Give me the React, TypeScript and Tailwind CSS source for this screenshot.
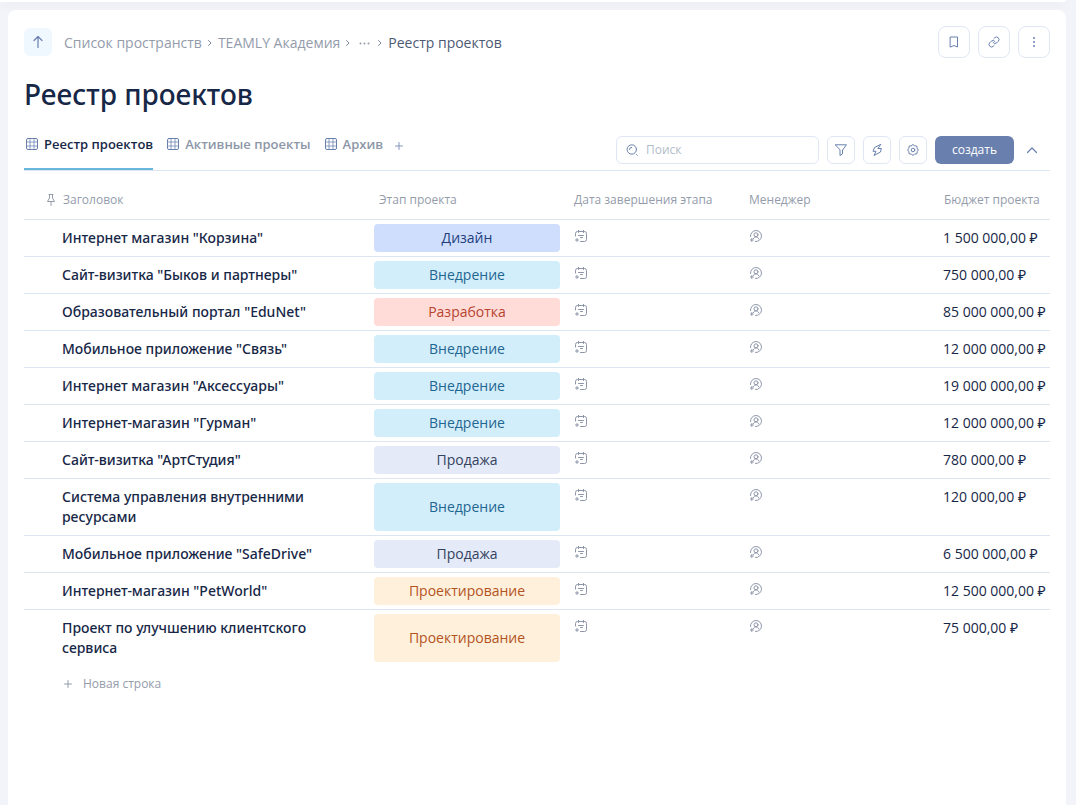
import type { ReactNode } from "react";
import { clsx } from "clsx";

type Stage = "Дизайн" | "Внедрение" | "Разработка" | "Продажа" | "Проектирование";

interface Project {
  title: string;
  stage: Stage;
  budget: string;
}

const stageStyles: Record<Stage, string> = {
  "Дизайн": "bg-[#cfdefd] text-[#1f3f7f]",
  "Внедрение": "bg-[#d3eefb] text-[#1f6690]",
  "Разработка": "bg-[#ffdcd8] text-[#b8432f]",
  "Продажа": "bg-[#e4eaf7] text-[#33425f]",
  "Проектирование": "bg-[#fff0dc] text-[#b3531c]",
};

const projects: Project[] = [
  { title: 'Интернет магазин "Корзина"', stage: "Дизайн", budget: "1 500 000,00 ₽" },
  { title: 'Сайт-визитка "Быков и партнеры"', stage: "Внедрение", budget: "750 000,00 ₽" },
  { title: 'Образовательный портал "EduNet"', stage: "Разработка", budget: "85 000 000,00 ₽" },
  { title: 'Мобильное приложение "Связь"', stage: "Внедрение", budget: "12 000 000,00 ₽" },
  { title: 'Интернет магазин "Аксессуары"', stage: "Внедрение", budget: "19 000 000,00 ₽" },
  { title: 'Интернет-магазин "Гурман"', stage: "Внедрение", budget: "12 000 000,00 ₽" },
  { title: 'Сайт-визитка "АртСтудия"', stage: "Продажа", budget: "780 000,00 ₽" },
  { title: "Система управления внутренними ресурсами", stage: "Внедрение", budget: "120 000,00 ₽" },
  { title: 'Мобильное приложение "SafeDrive"', stage: "Продажа", budget: "6 500 000,00 ₽" },
  { title: 'Интернет-магазин "PetWorld"', stage: "Проектирование", budget: "12 500 000,00 ₽" },
  { title: "Проект по улучшению клиентского сервиса", stage: "Проектирование", budget: "75 000,00 ₽" },
];

const tabs = [
  { label: "Реестр проектов", active: true },
  { label: "Активные проекты", active: false },
  { label: "Архив", active: false },
];

function Icon({ size = 12, box = 12, children }: { size?: number; box?: number; children: ReactNode }) {
  return (
    <svg
      width={size}
      height={size}
      viewBox={`0 0 ${box} ${box}`}
      fill="none"
      stroke="currentColor"
      strokeLinecap="round"
      strokeLinejoin="round"
      className="shrink-0"
      aria-hidden="true"
    >
      {children}
    </svg>
  );
}

function GridIcon() {
  return (
    <Icon>
      <rect x="0.5" y="0.5" width="11" height="11" rx="1.5" />
      <path d="M4 1v10M8 1v10M1 4h10M1 8h10" strokeOpacity="0.75" />
    </Icon>
  );
}

function ChevronSeparator() {
  return (
    <span className="text-[#7d889f]">
      <Icon size={8} box={8}>
        <path d="M2.5 1.5 5 4 2.5 6.500" />
      </Icon>
    </span>
  );
}

function PlusIcon() {
  return (
    <Icon size={8} box={8}>
      <path d="M4 0.5v7M0.5 4h7" />
    </Icon>
  );
}

function CalendarIcon() {
  return (
    <Icon>
      <path d="M0.5 6V3.5a2 2 0 0 1 2-2h7a2 2 0 0 1 2 2v6a2 2 0 0 1-2 2H5.5" />
      <path d="M3.5 0v2.5M8.5 0v2.5M3.5 5.5h5M5.5 7.5h2M2 8.5v3M0.5 10h3" />
    </Icon>
  );
}

function PersonIcon() {
  return (
    <Icon>
      <path d="M0.5 6.5A5.5 5.5 0 1 1 5.5 11.5" />
      <circle cx="6" cy="4.8" r="2" />
      <path d="M3.2 8.8C3.8 7.4 4.8 7 6 7s2.2 0.4 2.800 1.800M1.800 8.500v3M0.500 10h2.800" />
    </Icon>
  );
}

function IconButton({ label, large, children }: { label: string; large?: boolean; children: ReactNode }) {
  return (
    <button
      type="button"
      aria-label={label}
      className={clsx(
        "flex shrink-0 items-center justify-center border border-[#dfe7f5] text-[#6980af]",
        large ? "size-8 rounded-lg" : "size-7 rounded-md"
      )}
    >
      {children}
    </button>
  );
}

function PageHeader() {
  return (
    <header className="flex items-center justify-between">
      <nav aria-label="Навигация" className="flex items-center text-sm text-[#949cab]">
        <button type="button" aria-label="Наверх" className="mr-3 flex size-7 items-center justify-center rounded-md bg-[#f0f8ff] text-[#6980af]">
          <Icon size={14} box={14}>
            <path d="M7 12.5V1.5M3 5.5l4-4 4 4" strokeWidth="1.2" />
          </Icon>
        </button>
        <div className="flex items-center gap-1 pt-0.5">
          <a href="#spaces">Список пространств</a>
          <ChevronSeparator />
          <a href="#academy">TEAMLY Академия</a>
          <ChevronSeparator />
          <button type="button" aria-label="Показать путь" className="flex w-4 justify-center">
            <svg width="11" height="3" viewBox="0 0 11 3" fill="currentColor" aria-hidden="true">
              <circle cx="1.5" cy="1.5" r="1" />
              <circle cx="5.5" cy="1.5" r="1" />
              <circle cx="9.5" cy="1.5" r="1" />
            </svg>
          </button>
          <ChevronSeparator />
          <a href="#registry" className="text-[#4d5a73]">Реестр проектов</a>
        </div>
      </nav>
      <div className="flex gap-2">
        <IconButton label="В закладки" large>
          <Icon>
            <path d="M2.5 1h7v10L6 9.5 2.5 11z" />
          </Icon>
        </IconButton>
        <IconButton label="Скопировать ссылку" large>
          <Icon size={12} box={24}>
            <g strokeWidth="2">
              <path d="M10 13a5 5 0 0 0 7.54.54l3-3a5 5 0 0 0-7.07-7.07l-1.72 1.71" />
              <path d="M14 11a5 5 0 0 0-7.54-.54l-3 3a5 5 0 0 0 7.07 7.07l1.71-1.71" />
            </g>
          </Icon>
        </IconButton>
        <IconButton label="Ещё" large>
          <svg width="12" height="12" viewBox="0 0 12 12" fill="currentColor" aria-hidden="true">
            <circle cx="6" cy="2" r="1" />
            <circle cx="6" cy="6" r="1" />
            <circle cx="6" cy="10" r="1" />
          </svg>
        </IconButton>
      </div>
    </header>
  );
}

function Toolbar() {
  return (
    <div className="mt-4 flex h-[41px] items-stretch justify-between gap-4 border-b border-[#dce6f3]">
      <div className="flex text-[13px] font-semibold">
        {tabs.map((tab) => (
          <button
            key={tab.label}
            type="button"
            className={clsx(
              "mr-3 flex items-start gap-1.5 border-b-2 pl-0.5 leading-7 whitespace-nowrap",
              tab.active ? "border-[#69b6dc] text-[#172747]" : "border-transparent text-[#8d97a8]"
            )}
          >
            <span className="flex h-7 items-center text-[#6980af]">
              <GridIcon />
            </span>
            {tab.label}
          </button>
        ))}
        <button type="button" aria-label="Добавить вид" className="flex h-8 items-center text-[#8495bd]">
          <PlusIcon />
        </button>
      </div>
      <div className="flex items-start gap-2 pt-1.5">
        <label className="flex h-7 w-[203px] items-center gap-2 rounded-md border border-[#dfe7f5] px-[9px] text-[#6980af]">
          <Icon>
            <circle cx="5.8" cy="5.5" r="4.7" />
            <path d="M3.500 5.500a2.200 2.200 0 0 1 2.200-2.200M10.500 10.500l.8.8" />
          </Icon>
          <input
            type="text"
            aria-label="Поиск"
            placeholder="Поиск"
            className="w-full min-w-0 text-xs leading-5 text-[#172747] outline-none placeholder:text-[#b3bcc9]"
          />
        </label>
        <IconButton label="Фильтр">
          <Icon>
            <path d="M0.5 0.8h11L7.5 6v3.8L5 11.5V6z" />
          </Icon>
        </IconButton>
        <IconButton label="Автоматизации">
          <Icon>
            <path d="M9.500 0.500 3.500 3.500 2 7.300h3l-2 4.200L9.500 8l.8-3.500H7.300z" />
          </Icon>
        </IconButton>
        <IconButton label="Настройки">
          <Icon>
            <path d="M6 .6 7.4 1.7 9.8 2.2 10.3 4.6 11.4 6 10.3 7.4 9.8 9.8 7.4 10.3 6 11.4 4.6 10.3 2.2 9.8 1.7 7.4.6 6 1.7 4.6 2.2 2.2 4.6 1.7z" />
            <circle cx="6" cy="6" r="1.8" />
          </Icon>
        </IconButton>
        <button type="button" className="h-7 rounded-md bg-[#6980af] px-[17px] text-xs text-white">
          создать
        </button>
        <button type="button" aria-label="Свернуть" className="mr-2 flex h-7 w-5 items-center justify-center text-[#6980af]">
          <Icon>
            <path d="M1.5 8.500 6 4l4.500 4.500" strokeWidth="1.200" />
          </Icon>
        </button>
      </div>
    </div>
  );
}

function ProjectsTable() {
  return (
    <table className="w-full table-fixed border-separate border-spacing-0 text-left">
      <colgroup>
        <col />
        <col className="w-[195px]" />
        <col className="w-[175px]" />
        <col className="w-[195px]" />
        <col className="w-[115px]" />
      </colgroup>
      <thead>
        <tr className="h-[49px] text-xs text-[#949cab] [&>th]:border-b [&>th]:border-[#dce6f3] [&>th]:pt-2.5 [&>th]:pl-[9px] [&>th]:font-normal [&>th]:whitespace-nowrap">
          <th scope="col">
            <span className="flex items-center gap-1.5 pl-3">
              <Icon>
                <path d="M4 0.5h4M4.5 0.5V4L2.5 7.5h7L7.5 4V0.5M6 7.5v4" />
              </Icon>
              Заголовок
            </span>
          </th>
          <th scope="col">Этап проекта</th>
          <th scope="col">Дата завершения этапа</th>
          <th scope="col">Менеджер</th>
          <th scope="col">Бюджет проекта</th>
        </tr>
      </thead>
      <tbody>
        {projects.map((project) => (
          <tr
            key={project.title}
            className="align-top text-sm leading-5 text-[#172747] [&:not(:last-child)>td]:border-b [&>td]:border-[#dce6f3]"
          >
            <td className="py-2 pr-8 pl-[38px] font-['Noto_Sans','Open_Sans',sans-serif] font-medium">{project.title}</td>
            <td className="h-px py-1 pr-[5px] pl-1">
              <span className={clsx("flex h-full items-center justify-center rounded", stageStyles[project.stage])}>
                {project.stage}
              </span>
            </td>
            <td className="pt-2.5 pl-2.5 text-[#8d96a9]">
              <button type="button" aria-label="Указать дату" className="block">
                <CalendarIcon />
              </button>
            </td>
            <td className="pt-2.5 pl-2.5 text-[#8d96a9]">
              <button type="button" aria-label="Назначить менеджера" className="block">
                <PersonIcon />
              </button>
            </td>
            <td className="py-2 pl-2 whitespace-nowrap">{project.budget}</td>
          </tr>
        ))}
      </tbody>
    </table>
  );
}

export default function App() {
  return (
    <div className="flex min-h-screen flex-col bg-[#f3f4f9] pr-2.5 font-['Open_Sans','Noto_Sans',sans-serif]">
      <div className="h-0.5 rounded-br-lg bg-white shadow-[0_2px_12px_rgba(40,50,80,0.12)]" />
      <main className="relative mt-2 ml-2 flex-1 rounded-t-lg bg-white p-4">
        <PageHeader />
        <h1 className="mt-4 font-['Noto_Sans','Open_Sans',sans-serif] text-[28px] leading-10 font-medium text-[#172747]">
          Реестр проектов
        </h1>
        <Toolbar />
        <ProjectsTable />
        <button type="button" className="mt-2 ml-10 flex items-center gap-[11px] text-xs leading-5 text-[#949cab]">
          <PlusIcon />
          Новая строка
        </button>
      </main>
    </div>
  );
}
